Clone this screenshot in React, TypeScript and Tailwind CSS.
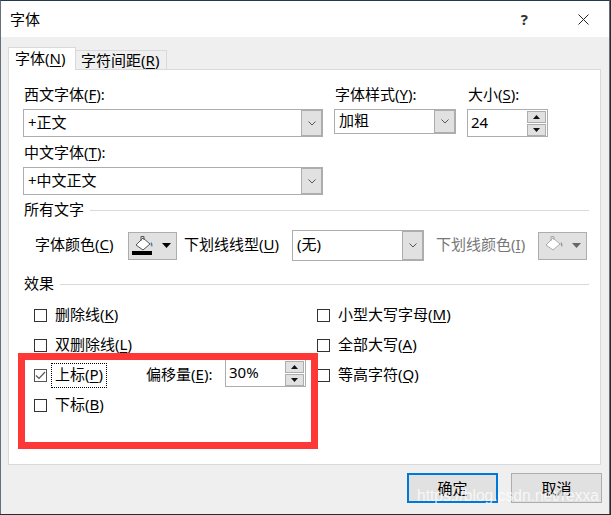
const FONT = "[font-family:'Noto_Sans','Noto_Sans_CJK_SC',sans-serif]";

function Key({ k }: { k: string }) {
  return (
    <>
      (<span className="underline underline-offset-2">{k}</span>)
    </>
  );
}

function Chevron() {
  return (
    <svg width="8" height="5" viewBox="0 0 8 5" fill="none" stroke="#555555" strokeWidth="1">
      <path d="M0.500 0.500l3.500 3.500 3.500-3.500" />
    </svg>
  );
}

function Combo({ value, className }: { value: string; className: string }) {
  return (
    <div className={`flex border border-[#adadad] bg-white ${className}`}>
      <div className="flex-1 pl-[4px] pb-[2px] text-[15px] leading-none flex items-center">{value}</div>
      <div className="w-[22px] bg-[#e1e1e1] border-2 border-l border-[#adadad] flex items-center justify-center -my-px -mr-px">
        <Chevron />
      </div>
    </div>
  );
}

function Spin({ value, className }: { value: string; className: string }) {
  return (
    <div className={`w-[81px] h-[28px] border border-[#adadad] bg-white flex items-center pl-[2px] pr-[1px] ${className}`}>
      <div className="flex-1 text-[15px] pl-px pb-[2px]">{value}</div>
      <div className="flex flex-col gap-px">
        <div className="w-[19px] h-[12px] bg-[#e1e1e1] border border-[#adadad] flex items-center justify-center">
          <svg width="7" height="4" viewBox="0 0 7 4"><path d="M3.500 0L7 4H0z" fill="#111" /></svg>
        </div>
        <div className="w-[19px] h-[12px] bg-[#e1e1e1] border border-[#adadad] flex items-center justify-center">
          <svg width="7" height="4" viewBox="0 0 7 4"><path d="M0 0h7L3.500 4z" fill="#111" /></svg>
        </div>
      </div>
    </div>
  );
}

function Check({ checked, label, k }: { checked?: boolean; label: string; k: string }) {
  return (
    <div className="flex items-center h-[30px]">
      <div className={`w-[13px] h-[13px] border flex items-center justify-center ${checked ? "border-[#555555]" : "border-[#333333]"}`}>
        {checked && (
          <svg width="11" height="9" viewBox="0 0 11 9" fill="none" stroke="#555555" strokeWidth="1.2">
            <path d="M1 4.500l3 3 6-6.500" />
          </svg>
        )}
      </div>
      <div className={`ml-[8px] text-[15px] leading-none pb-[2px] ${checked ? "outline-1 outline-dotted outline-black outline-offset-[3px]" : ""}`}>
        {label}
        <Key k={k} />
      </div>
    </div>
  );
}

function Section({ title }: { title: string }) {
  return (
    <div className="flex items-center h-[22px] text-[15px] pl-px">
      <span className="-mt-[2px]">{title}</span>
      <div className="h-px flex-1 bg-[#d9d9d9] ml-[6px]" />
    </div>
  );
}

function ColorButton({ disabled }: { disabled?: boolean }) {
  const line = disabled ? "#aaaaaa" : "#555555";
  return (
    <div className="w-[49px] h-[28px] bg-[#e1e1e1] border border-[#adadad] flex items-center pl-[3px]">
      <svg width="42" height="24" viewBox="0 0 42 24">
        <path d="M4 11L11 4l7 6-7 6z" fill="#fff" stroke={line} />
        <path d="M9 7V2.500h3V6" fill="none" stroke={line} />
        <path d="M19 8c1.500 1 2 3 1 5-1-1-2-3-1-5z" fill={disabled ? "#9a9a9a" : "#4a7fb8"} />
        {!disabled && <rect x="0" y="17" width="20" height="4" fill="#000" />}
        <path d="M30 9h9l-4.500 5z" fill={disabled ? "#666666" : "#000000"} />
      </svg>
    </div>
  );
}

export default function App() {
  return (
    <div className={`w-[611px] h-[515px] bg-[#2a2a2a] overflow-hidden relative text-black ${FONT}`}>
      <div className="w-[610px] h-[514px] border-l border-t border-r border-[#66707a] border-t-[#22384c] flex flex-col">
        <div className="h-[36px] bg-white flex items-center pl-[9px] text-[15px] shrink-0">
          <span className="flex-1">字体</span>
          <span className="mr-[50px] text-[15px] font-bold leading-none text-[#333333]">?</span>
          <svg className="mr-[20px]" width="11" height="11" viewBox="0 0 11 11" stroke="#222" strokeWidth="1">
            <path d="M0.500 0.500l10 10M10.500 0.500l-10 10" />
          </svg>
        </div>
        <div className="flex-1 bg-[#efefef] pl-[7px] pt-[10px]">
          <div className="flex items-end h-[23px] relative z-10 text-[15px]">
            <div className="w-[68px] h-[23px] bg-white border border-b-0 border-[#d9d9d9] pl-[6px] pb-[2px] flex items-center">
              字体<Key k="N" />
            </div>
            <div className="w-[91px] h-[20px] border border-[#d9d9d9] border-l-0 pl-[5px] flex items-center">
              字符间距<Key k="R" />
            </div>
          </div>
          <div className="relative w-[593px] h-[396px] -mt-px bg-white border border-[#d9d9d9] pl-[14px] pr-[11px] text-[15px]">
            <div className="flex pt-[14px] leading-[20px]">
              <div className="w-[311px]">
                <div className="h-[22px] pl-px">
                  西文字体<Key k="F" />:
                </div>
                <Combo value="+正文" className="w-[300px] h-[28px] mt-[3px]" />
                <div className="h-[22px] mt-[5px] pl-px">
                  中文字体<Key k="T" />:
                </div>
                <Combo value="+中文正文" className="w-[300px] h-[28px] mt-[3px]" />
              </div>
              <div className="w-[133px]">
                <div className="h-[22px] pl-px">
                  字体样式<Key k="Y" />:
                </div>
                <Combo value="加粗" className="w-[122px] h-[25px] mt-[3px]" />
              </div>
              <div>
                <div className="h-[22px] pl-px">
                  大小<Key k="S" />:
                </div>
                <Spin value="24" className="mt-[3px]" />
              </div>
            </div>

            <div className="mt-[4px]">
              <Section title="所有文字" />
            </div>
            <div className="flex items-center h-[31px] mt-[9px] pl-[12px]">
              <span className="w-[93px] -mt-[2px]">
                字体颜色<Key k="C" />
              </span>
              <ColorButton />
              <span className="ml-[7px] w-[108px] -mt-[2px]">
                下划线线型<Key k="U" />
              </span>
              <Combo value="(无)" className="w-[132px] h-[31px]" />
              <span className="ml-[12px] w-[102px] -mt-[2px] text-[#777777]">
                下划线颜色<Key k="I" />
              </span>
              <ColorButton disabled />
            </div>

            <div className="mt-[12px]">
              <Section title="效果" />
            </div>
            <div className="grid grid-cols-[283px_1fr] mt-[5px] pl-[11px]">
              <div>
                <Check label="删除线" k="K" />
                <Check label="双删除线" k="L" />
                <div className="flex items-start h-[30px]">
                  <div className="w-[112px]">
                    <Check checked label="上标" k="P" />
                  </div>
                  <span className="mt-[3px] w-[79px]">
                    偏移量<Key k="E" />:
                  </span>
                  <Spin value="30%" className="-mt-[1px]" />
                </div>
                <Check label="下标" k="B" />
              </div>
              <div>
                <Check label="小型大写字母" k="M" />
                <Check label="全部大写" k="A" />
                <Check label="等高字符" k="Q" />
              </div>
            </div>

            {/* red annotation drawn over the dialog */}
            <div className="absolute left-[9px] top-[283px] w-[300px] h-[96px] border-[7px] border-[#ff3737]" />
          </div>
          <div className="flex mt-[8px] pl-[399px] gap-[13px] text-[15px]">
            <div className="w-[91px] h-[30px] bg-[#e1e1e1] border-2 border-[#0078d7] flex items-center justify-center">确定</div>
            <div className="w-[91px] h-[30px] bg-[#e1e1e1] border border-[#adadad] flex items-center justify-center">取消</div>
          </div>
        </div>
      </div>
      <div className="absolute left-[417px] top-[484px] text-[15.6px] leading-[24px] text-white/75 whitespace-nowrap [font-family:'Liberation_Sans',sans-serif]">
        https://blog.csdn.net/rexxa
      </div>
    </div>
  );
}
